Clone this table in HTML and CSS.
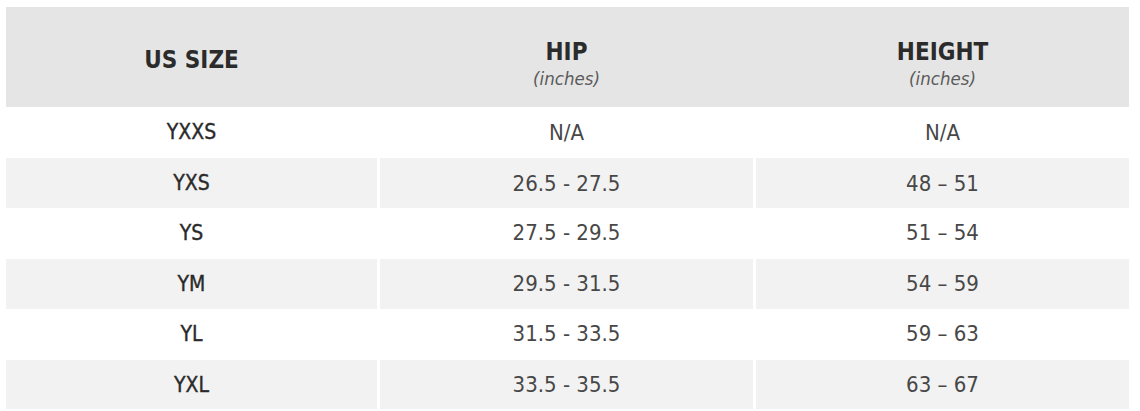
FILE: index.html
```html
<!DOCTYPE html>
<html>
<head>
<meta charset="utf-8">
<link rel="stylesheet" href="styles.css">
</head>
<body>
<div class="chart">
  <div class="head">
    <div class="hcell"><span class="title">US SIZE</span></div>
    <div class="hcell stack"><span class="title">HIP</span><span class="unit">(inches)</span></div>
    <div class="hcell stack"><span class="title">HEIGHT</span><span class="unit">(inches)</span></div>
  </div>
  <div class="row">
    <div class="cell size">YXXS</div><div class="cell">N/A</div><div class="cell">N/A</div>
  </div>
  <div class="row alt">
    <div class="cell size">YXS</div><div class="cell">26.5 - 27.5</div><div class="cell">48 – 51</div>
  </div>
  <div class="row">
    <div class="cell size">YS</div><div class="cell">27.5 - 29.5</div><div class="cell">51 – 54</div>
  </div>
  <div class="row alt">
    <div class="cell size">YM</div><div class="cell">29.5 - 31.5</div><div class="cell">54 – 59</div>
  </div>
  <div class="row">
    <div class="cell size">YL</div><div class="cell">31.5 - 33.5</div><div class="cell">59 – 63</div>
  </div>
  <div class="row alt">
    <div class="cell size">YXL</div><div class="cell">33.5 - 35.5</div><div class="cell">63 – 67</div>
  </div>
</div>
</body>
</html>
```

FILE: styles.css
```css
html, body {
  margin: 0;
  padding: 0;
  background: #ffffff;
}
body {
  font-family: "DejaVu Sans Condensed", Roboto, sans-serif;
  color: #3a3a3a;
}
.chart {
  width: 1123px;
  margin: 7px 0 0 6px;
}
.head {
  display: grid;
  grid-template-columns: 371px 373px 373px;
  column-gap: 3px;
  height: 100px;
  background: #e5e5e5;
}
.hcell {
  display: flex;
  flex-direction: column;
  align-items: center;
  justify-content: center;
  padding-top: 6px;
}
.hcell.stack {
  padding-top: 14px;
}
.title {
  font-weight: bold;
  font-size: 24px;
  line-height: 26px;
  color: #2b2b2b;
}
.unit {
  font-style: italic;
  font-size: 18.5px;
  line-height: 22px;
  margin-top: 3px;
  color: #5a5a5a;
}
.row {
  display: grid;
  grid-template-columns: 371px 373px 373px;
  column-gap: 3px;
  height: 50.4px;
  box-sizing: border-box;
}
.row.alt {
  padding-top: 1px;
}
.cell {
  display: flex;
  align-items: center;
  justify-content: center;
  font-size: 22px;
  color: #474747;
}
.row.alt .cell {
  background: #f2f2f2;
}
.cell.size {
  font-size: 21px;
  color: #2a2a2a;
  -webkit-text-stroke: 0.35px #2a2a2a;
}
```
